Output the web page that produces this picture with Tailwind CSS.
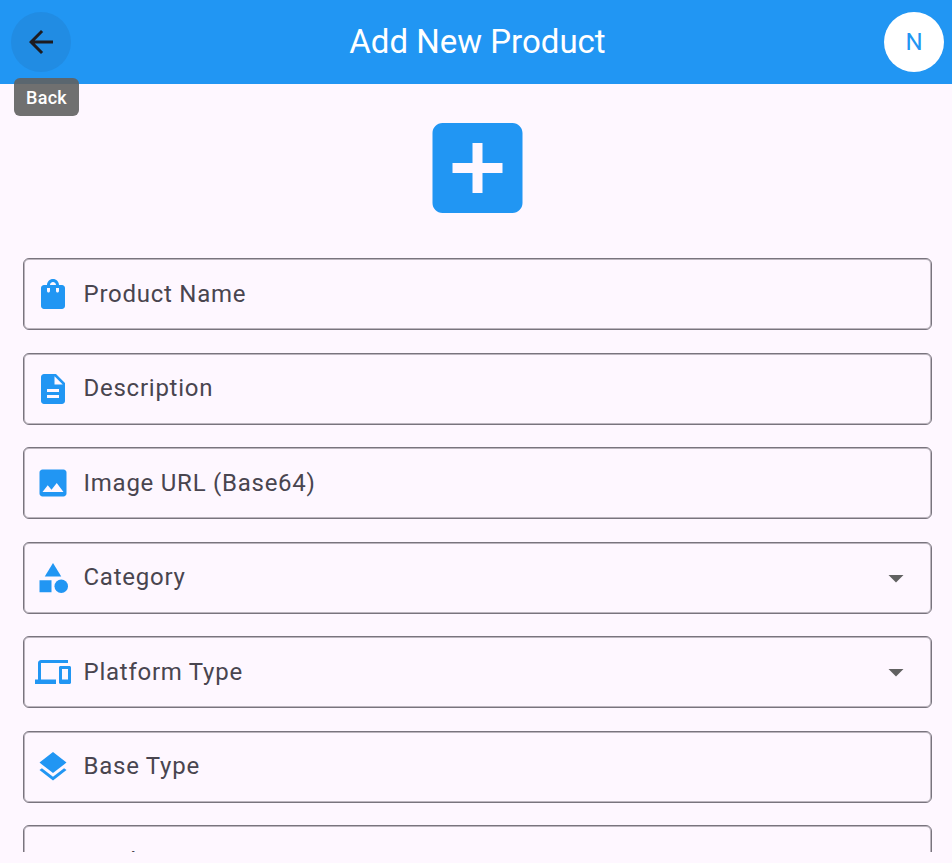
<!DOCTYPE html>
<html lang="en">
<head>
<meta charset="utf-8">
<title>Add New Product</title>
<script src="https://cdn.jsdelivr.net/npm/@tailwindcss/browser@4"></script>
</head>
<body class="bg-[#fef7ff] font-[Roboto,sans-serif] h-[863px] overflow-hidden">
<header class="relative h-[84px] bg-[#2196f3] flex items-center justify-between pl-[11px] pr-2">
  <button class="size-[60px] rounded-full bg-[#218ce3] flex items-center justify-center" aria-label="Back">
    <svg class="size-9" viewBox="0 0 24 24" fill="#1d1b20"><path d="M20 11H7.83l5.59-5.59L12 4l-8 8 8 8 1.41-1.41L7.83 13H20v-2z"/></svg>
  </button>
  <h1 class="text-white text-[33px] leading-none whitespace-nowrap pb-0.5">Add New Product</h1>
  <div class="size-[60px] rounded-full bg-white text-[#2196f3] text-2xl flex items-center justify-center">N</div>
  <div class="absolute left-[14px] top-[78px] w-[65px] h-[37.5px] rounded-[6px] bg-[#616161]/90 text-white text-lg font-medium tracking-[0.3px] pt-0.5 flex items-center justify-center">Back</div>
</header>
<main class="h-[768px] overflow-hidden pl-[23px] pr-5">
  <div class="flex justify-center pt-[24px]">
    <svg class="w-[121px] h-[120px]" viewBox="0 0 121 120" fill="#2196f3"><g transform="translate(0.5 0) scale(5)"><path d="M19 3H5c-1.11 0-2 .9-2 2v14c0 1.1.89 2 2 2h14c1.1 0 2-.9 2-2V5c0-1.1-.9-2-2-2zm-2 10h-4v4h-2v-4H7v-2h4V7h2v4h4v2z"/></g></svg>
  </div>
  <div class="mt-[30px] flex flex-col gap-[22.5px] text-2xl tracking-[0.75px] text-[#49454f]">
    <div class="h-[72px] shrink-0 rounded-[6px] border border-[#79747e] shadow-[inset_0_0_0_1px_rgb(121_116_126_/_0.5)] flex items-center pl-[11px] pr-[17px]">
      <svg class="size-9" viewBox="0 0 24 24" fill="#2196f3"><path d="M18 6h-2c0-2.21-1.79-4-4-4S8 3.79 8 6H6c-1.1 0-2 .9-2 2v12c0 1.1.9 2 2 2h12c1.1 0 2-.9 2-2V8c0-1.1-.9-2-2-2zm-8 4c0 .55-.45 1-1 1s-1-.45-1-1V8h2v2zm2-6c1.1 0 2 .9 2 2h-4c0-1.1.9-2 2-2zm4 6c0 .55-.45 1-1 1s-1-.45-1-1V8h2v2z"/></svg>
      <span class="ml-[12.5px]">Product Name</span>
    </div>
    <div class="h-[72px] shrink-0 rounded-[6px] border border-[#79747e] shadow-[inset_0_0_0_1px_rgb(121_116_126_/_0.5)] flex items-center pl-[11px] pr-[17px]">
      <svg class="size-9" viewBox="0 0 24 24" fill="#2196f3"><path d="M14 2H6c-1.1 0-1.99.9-1.99 2L4 20c0 1.1.89 2 1.99 2H18c1.1 0 2-.9 2-2V8l-6-6zm2 16H8v-2h8v2zm0-4H8v-2h8v2zm-3-5V3.500L18.500 9H13z"/></svg>
      <span class="ml-[12.5px] pb-[1.5px]">Description</span>
    </div>
    <div class="h-[72px] shrink-0 rounded-[6px] border border-[#79747e] shadow-[inset_0_0_0_1px_rgb(121_116_126_/_0.5)] flex items-center pl-[11px] pr-[17px]">
      <svg class="size-9" viewBox="0 0 24 24" fill="#2196f3"><path d="M21 19V5c0-1.100-.9-2-2-2H5c-1.100 0-2 .9-2 2v14c0 1.100.9 2 2 2h14c1.100 0 2-.9 2-2zM8.500 13.500l2.500 3.010L14.500 12l4.500 6H5l3.500-4.500z"/></svg>
      <span class="ml-[12.5px]">Image URL (Base64)</span>
    </div>
    <div class="h-[72px] shrink-0 rounded-[6px] border border-[#79747e] shadow-[inset_0_0_0_1px_rgb(121_116_126_/_0.5)] flex items-center pl-[11px] pr-[17px]">
      <svg class="size-9" viewBox="0 0 24 24" fill="#2196f3"><path d="M12 2l-5.500 9h11z"/><circle cx="17.500" cy="17.500" r="4.500"/><path d="M3 13.500h8v8H3z"/></svg>
      <span class="ml-[12.5px] pb-[1.5px] flex-1">Category</span>
      <svg class="size-9" viewBox="0 0 24 24" fill="#616161"><path d="M7 10l5 5 5-5z"/></svg>
    </div>
    <div class="h-[72px] shrink-0 rounded-[6px] border border-[#79747e] shadow-[inset_0_0_0_1px_rgb(121_116_126_/_0.5)] flex items-center pl-[11px] pr-[17px]">
      <svg class="size-9" viewBox="0 0 24 24" fill="#2196f3"><path d="M4 6h18V4H4c-1.100 0-2 .9-2 2v11H0v3h14v-3H4V6zm19 2h-6c-.55 0-1 .45-1 1v10c0 .55.45 1 1 1h6c.55 0 1-.45 1-1V9c0-.55-.45-1-1-1zm-1 9h-4v-7h4v7z"/></svg>
      <span class="ml-[12.5px] flex-1">Platform Type</span>
      <svg class="size-9" viewBox="0 0 24 24" fill="#616161"><path d="M7 10l5 5 5-5z"/></svg>
    </div>
    <div class="h-[72px] shrink-0 rounded-[6px] border border-[#79747e] shadow-[inset_0_0_0_1px_rgb(121_116_126_/_0.5)] flex items-center pl-[11px] pr-[17px]">
      <svg class="size-9" viewBox="0 0 24 24" fill="#2196f3"><path d="M11.990 18.540l-7.370-5.730L3 14.070l9 7 9-7-1.630-1.270-7.380 5.740zM12 16l7.360-5.730L21 9l-9-7-9 7 1.630 1.270L12 16z"/></svg>
      <span class="ml-[12.5px] pb-[1.5px]">Base Type</span>
    </div>
    <div class="h-[72px] shrink-0 rounded-[6px] border border-[#79747e] shadow-[inset_0_0_0_1px_rgb(121_116_126_/_0.5)] flex items-center pl-[11px] pr-[17px]">
      <span class="ml-[48.5px]">Product ID</span>
    </div>
  </div>
</main>
</body>
</html>
